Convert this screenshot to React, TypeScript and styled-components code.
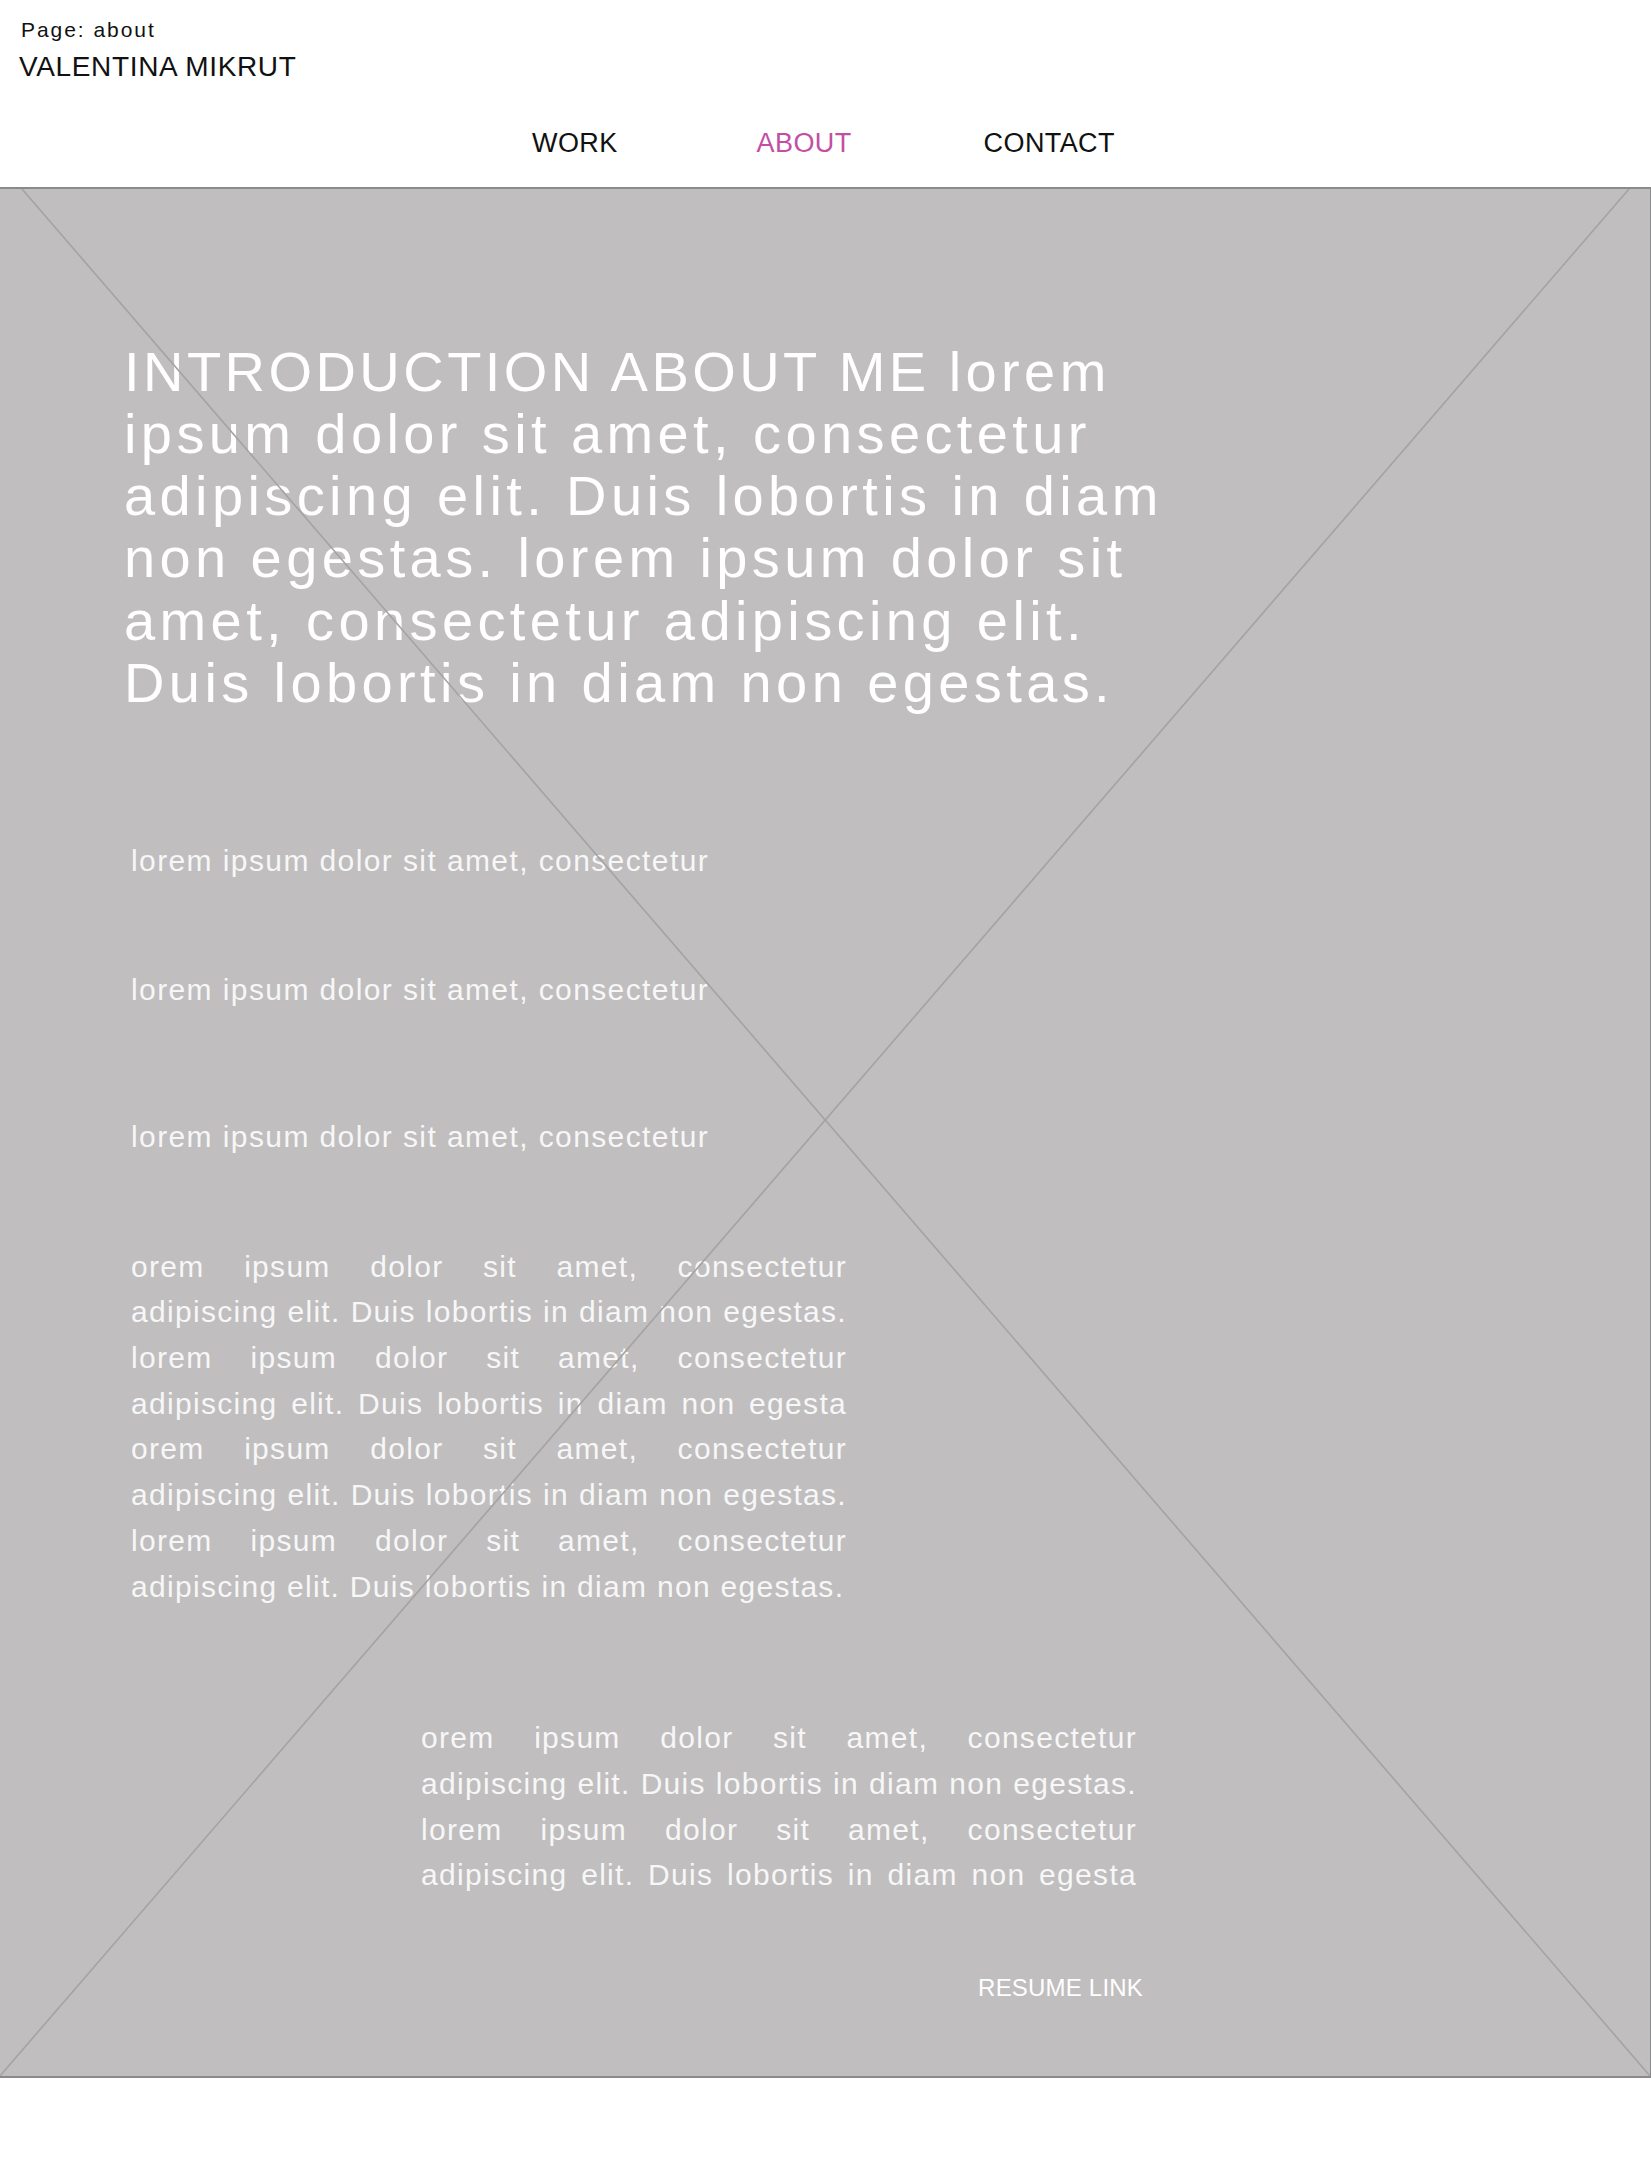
import React from "react";
import styled, { createGlobalStyle } from "styled-components";

const GlobalStyle = createGlobalStyle`
  html, body {
    margin: 0;
    padding: 0;
    background: #ffffff;
  }
  body {
    font-family: "Liberation Sans", Arial, Helvetica, sans-serif;
    -webkit-font-smoothing: antialiased;
  }
  * { box-sizing: border-box; }
`;

const Page = styled.div`
  width: 1651px;
  min-height: 2174px;
  background: #ffffff;
`;

const Header = styled.header`
  padding: 17px 0 0 19px;
  color: #111111;
`;

const PageLabel = styled.div`
  font-size: 21px;
  line-height: 26px;
  letter-spacing: 1.95px;
  padding-left: 2px;
`;

const SiteName = styled.div`
  margin-top: 7px;
  font-size: 28px;
  line-height: 34px;
  letter-spacing: 0.65px;
`;

const Nav = styled.nav`
  display: flex;
  align-items: center;
  margin-top: 43px;
  padding-left: 532px;
  height: 32px;
`;

const NavLink = styled.a<{ $active?: boolean; $offset: number }>`
  margin-left: ${(p) => p.$offset}px;
  font-size: 27px;
  line-height: 32px;
  letter-spacing: 0.4px;
  color: ${(p) => (p.$active ? "#c24fa3" : "#111111")};
  text-decoration: none;
  cursor: pointer;
`;

const Panel = styled.section`
  position: relative;
  margin-top: 28px;
  background: #c0bebf;
  border-top: 2px solid #8a898b;
  border-bottom: 2px solid #8a898b;
  border-right: 1px solid #8a898b;
  padding: 151.5px 0 74.3px;
  overflow: hidden;
`;

const Cross = styled.svg`
  position: absolute;
  inset: 0;
  width: 100%;
  height: 100%;
  pointer-events: none;
  z-index: 1;
`;

const Heading = styled.h1`
  margin: 0 0 0 124px;
  font-size: 56px;
  line-height: 62.3px;
  font-weight: 400;
  letter-spacing: 4.4px;
  color: #ffffff;
`;

const Caps = styled.span`
  letter-spacing: 3.45px;
`;

const Line = styled.span`
  display: block;
  white-space: nowrap;
`;

const Tagline = styled.p<{ $gap: number }>`
  margin: ${(p) => p.$gap}px 0 0 131px;
  font-size: 30px;
  line-height: 36px;
  letter-spacing: 1.4px;
  color: #f7f7f7;
`;

const Paragraph = styled.p<{ $gap: number; $indent: number }>`
  margin: ${(p) => p.$gap}px 0 0 ${(p) => p.$indent}px;
  width: 716px;
  font-size: 30px;
  line-height: 45.7px;
  letter-spacing: 1.3px;
  color: #f7f7f7;
`;

const JustLine = styled.span<{ $last?: boolean }>`
  display: block;
  text-align: justify;
  text-align-last: ${(p) => (p.$last ? "left" : "justify")};
`;

const ResumeRow = styled.div`
  display: flex;
  justify-content: flex-end;
  margin: 75.6px 0 0 131px;
  width: 1012px;
`;

const ResumeLink = styled.a`
  font-size: 24px;
  line-height: 28px;
  letter-spacing: 0.2px;
  color: #ffffff;
  text-decoration: none;
  cursor: pointer;
`;

const paragraphA = [
  "orem ipsum dolor sit amet, consectetur",
  "adipiscing elit. Duis lobortis in diam non egestas.",
  "lorem ipsum dolor sit amet, consectetur",
  "adipiscing elit. Duis lobortis in diam non egesta",
  "orem ipsum dolor sit amet, consectetur",
  "adipiscing elit. Duis lobortis in diam non egestas.",
  "lorem ipsum dolor sit amet, consectetur",
  "adipiscing elit. Duis lobortis in diam non egestas.",
];

const paragraphB = [
  "orem ipsum dolor sit amet, consectetur",
  "adipiscing elit. Duis lobortis in diam non egestas.",
  "lorem ipsum dolor sit amet, consectetur",
  "adipiscing elit. Duis lobortis in diam non egesta",
];

const headingLines = [
  "ipsum dolor sit amet, consectetur",
  "adipiscing elit. Duis lobortis in diam",
  "non egestas. lorem ipsum dolor sit",
  "amet, consectetur adipiscing elit.",
  "Duis lobortis in diam non egestas.",
];

export default function App() {
  return (
    <Page>
      <GlobalStyle />
      <Header>
        <PageLabel>Page: about</PageLabel>
        <SiteName>VALENTINA MIKRUT</SiteName>
      </Header>
      <Nav>
        <NavLink $offset={0}>WORK</NavLink>
        <NavLink $offset={139} $active>
          ABOUT
        </NavLink>
        <NavLink $offset={132}>CONTACT</NavLink>
      </Nav>
      <Panel>
        <Heading>
          <Line>
            <Caps>INTRODUCTION ABOUT ME </Caps>lorem
          </Line>
          {headingLines.map((l, i) => (
            <Line key={i}>{l}</Line>
          ))}
        </Heading>
        <Tagline $gap={128.3}>lorem ipsum dolor sit amet, consectetur</Tagline>
        <Tagline $gap={93}>lorem ipsum dolor sit amet, consectetur</Tagline>
        <Tagline $gap={111}>lorem ipsum dolor sit amet, consectetur</Tagline>
        <Paragraph $gap={89} $indent={131}>
          {paragraphA.map((l, i) => (
            <JustLine key={i} $last={i === paragraphA.length - 1}>
              {l}
            </JustLine>
          ))}
        </Paragraph>
        <Paragraph $gap={106} $indent={421}>
          {paragraphB.map((l, i) => (
            <JustLine key={i}>{l}</JustLine>
          ))}
        </Paragraph>
        <ResumeRow>
          <ResumeLink>RESUME LINK</ResumeLink>
        </ResumeRow>
        <Cross viewBox="0 0 1650 1888" preserveAspectRatio="none">
          <line
            x1="22"
            y1="0"
            x2="1650"
            y2="1888"
            stroke="#a4a2a3"
            strokeWidth="1.6"
            vectorEffect="non-scaling-stroke"
          />
          <line
            x1="1629"
            y1="0"
            x2="0"
            y2="1888"
            stroke="#a4a2a3"
            strokeWidth="1.6"
            vectorEffect="non-scaling-stroke"
          />
        </Cross>
      </Panel>
    </Page>
  );
}
